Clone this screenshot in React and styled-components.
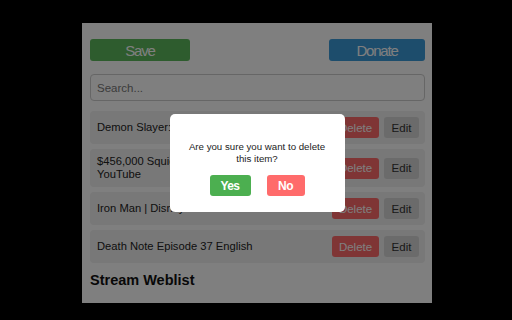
import React from "react";
import styled, { createGlobalStyle } from "styled-components";

const GlobalStyle = createGlobalStyle`
  html, body {
    margin: 0;
    padding: 0;
    background: #000;
  }
  body {
    font-family: "Liberation Sans", Arial, sans-serif;
  }
`;

const Page = styled.div`
  width: 512px;
  height: 320px;
  display: flex;
  justify-content: center;
  padding-top: 23px;
  box-sizing: border-box;
`;

const Popup = styled.div`
  position: relative;
  width: 350px;
  height: 280px;
  margin-left: 2px;
  background: #fff;
  overflow: hidden;
  padding: 16px 7px 0 8px;
  box-sizing: border-box;
`;

const Toolbar = styled.div`
  display: flex;
  justify-content: space-between;
`;

const TopButton = styled.button`
  width: ${(p) => p.w}px;
  height: 22px;
  border: none;
  border-radius: 3px;
  background: ${(p) => p.bg};
  color: #fff;
  font-family: inherit;
  font-size: 15px;
  letter-spacing: -1.2px;
  padding: 0;
`;

const Search = styled.input`
  display: block;
  width: 100%;
  height: 27px;
  margin-top: 13px;
  box-sizing: border-box;
  border: 1px solid #ccc;
  border-radius: 4px;
  padding: 0 6px;
  font-family: inherit;
  font-size: 11.5px;
  &::placeholder {
    color: #777;
  }
`;

const List = styled.div`
  display: flex;
  flex-direction: column;
  gap: 5px;
  margin-top: 10px;
`;

const Row = styled.div`
  display: flex;
  align-items: center;
  gap: 8px;
  background: #f0f0f0;
  border-radius: 4px;
  padding: 6px 6px 6px 7px;
  min-height: 21px;
`;

const Title = styled.div`
  flex: 1;
  font-size: 11.2px;
  line-height: 13px;
  color: #222;
`;

const Actions = styled.div`
  display: flex;
  gap: 5px;
`;

const SmallButton = styled.button`
  height: 21px;
  width: ${(p) => p.w}px;
  border: none;
  border-radius: 3px;
  background: ${(p) => p.bg};
  color: ${(p) => p.fg};
  font-family: inherit;
  font-size: 11.5px;
  padding: 0;
`;

const Heading = styled.h2`
  margin: 9px 0 0;
  font-size: 14.5px;
  font-weight: bold;
  color: #111;
`;

const Overlay = styled.div`
  position: absolute;
  inset: 0;
  background: rgba(0, 0, 0, 0.5);
  display: flex;
  align-items: center;
  justify-content: center;
`;

const Modal = styled.div`
  width: 175px;
  height: 98px;
  box-sizing: border-box;
  background: #fff;
  border-radius: 5px;
  padding: 27px 14px 0;
  text-align: center;
`;

const Message = styled.p`
  margin: 0;
  font-size: 9.7px;
  line-height: 11.5px;
  color: #222;
`;

const ModalActions = styled.div`
  display: flex;
  justify-content: center;
  gap: 16px;
  margin-top: 11px;
`;

const ModalButton = styled.button`
  width: ${(p) => p.w}px;
  height: 21px;
  border: none;
  border-radius: 3px;
  background: ${(p) => p.bg};
  color: #fff;
  font-family: inherit;
  font-size: 12px;
  font-weight: bold;
  letter-spacing: -0.6px;
  padding: 0;
`;

const items = [
  "Demon Slayer: Kimetsu no Yaiba",
  "$456,000 Squid Game In Real Life! - YouTube",
  "Iron Man | Disney+",
  "Death Note Episode 37 English",
];

export default function App() {
  return (
    <>
      <GlobalStyle />
      <Page>
        <Popup>
          <Toolbar>
            <TopButton w={100} bg="#5cb85c">Save</TopButton>
            <TopButton w={96} bg="#3a9ad9">Donate</TopButton>
          </Toolbar>
          <Search placeholder="Search..." />
          <List>
            {items.map((t) => (
              <Row key={t}>
                <Title>{t}</Title>
                <Actions>
                  <SmallButton w={47} bg="#ff6b6b" fg="#fff">Delete</SmallButton>
                  <SmallButton w={35} bg="#d6d6d6" fg="#333">Edit</SmallButton>
                </Actions>
              </Row>
            ))}
          </List>
          <Heading>Stream Weblist</Heading>
          <Overlay>
            <Modal>
              <Message>Are you sure you want to delete this item?</Message>
              <ModalActions>
                <ModalButton w={41} bg="#4caf50">Yes</ModalButton>
                <ModalButton w={38} bg="#ff6b6b">No</ModalButton>
              </ModalActions>
            </Modal>
          </Overlay>
        </Popup>
      </Page>
    </>
  );
}
